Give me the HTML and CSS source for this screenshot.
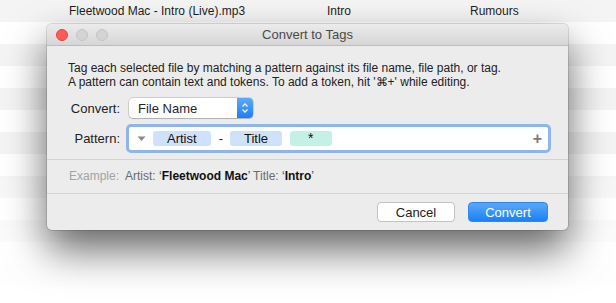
FILE: index.html
```html
<!DOCTYPE html>
<html>
<head>
  <title>Convert to Tags</title>
  <link rel="stylesheet" href="styles.css">
</head>
<body>
  <!-- 後ろのファイル一覧 -->
  <div class="file-list">
    <div class="row"><span class="c-file">Fleetwood Mac - Intro (Live).mp3</span><span class="c-title">Intro</span><span class="c-album">Rumours</span></div>
    <div class="row"></div>
    <div class="row"></div>
    <div class="row"></div>
    <div class="row"></div>
    <div class="row"></div>
    <div class="row"></div>
    <div class="row"></div>
    <div class="row"></div>
    <div class="row"></div>
    <div class="row"></div>
    <div class="row"></div>
    <div class="row"></div>
    <div class="row"></div>
  </div>
  <div class="fade"></div>

  <!-- シート -->
  <div class="sheet">
    <div class="titlebar">
      <div class="lights">
        <span class="light red"></span>
        <span class="light"></span>
        <span class="light"></span>
      </div>
      <div class="title">Convert to Tags</div>
    </div>

    <div class="body">
      <p class="intro">Tag each selected file by matching a pattern against its file name, file path, or tag.<br>A pattern can contain text and tokens. To add a token, hit '&#8984;+' while editing.</p>

      <div class="field">
        <label class="label">Convert:</label>
        <div class="popup">
          <span class="popup-text">File Name</span>
          <span class="stepper">
            <svg width="8" height="12" viewBox="0 0 8 12"><path d="M1.5 4.5 L4 2 L6.5 4.5 M1.5 7.5 L4 10 L6.5 7.5" fill="none" stroke="#fff" stroke-width="1.3"/></svg>
          </span>
        </div>
      </div>

      <div class="field pattern-field">
        <label class="label">Pattern:</label>
        <div class="token-field">
          <svg class="menu-arrow" width="9" height="6" viewBox="0 0 9 6"><path d="M0.5 0.5 L8.5 0.5 L4.5 5 Z" fill="#8a8a8a"/></svg>
          <span class="token">Artist</span>
          <span class="sep">-</span>
          <span class="token">Title</span>
          <span class="token any">*</span>
          <span class="plus">+</span>
        </div>
      </div>
    </div>

    <div class="example">
      <span class="ex-label">Example:</span>&nbsp; Artist: <span class="q">&lsquo;<b>Fleetwood Mac</b>&rsquo;</span> Title: <span class="q">&lsquo;<b>Intro</b>&rsquo;</span>
    </div>

    <div class="buttons">
      <button class="btn">Cancel</button>
      <button class="btn primary">Convert</button>
    </div>
  </div>
</body>
</html>
```

FILE: styles.css
```css
/* 全体 */
body {
  margin: 0;
  width: 616px;
  height: 303px;
  overflow: hidden;
  position: relative;
  background: #fff;
  font-family: "Liberation Sans", Arial, sans-serif;
  color: #262626;
}

/* 後ろの一覧 */
.file-list {
  display: flex;
  flex-direction: column;
}

.row {
  display: flex;
  align-items: center;
  height: 22px;
  font-size: 12px;
  color: #1e1e1e;
}

.row:nth-child(odd) {
  background: #f4f4f4;
}

.c-file {
  width: 258px;
  padding-left: 69px;
}

.c-title {
  width: 143px;
}

/* 下のほうを白く */
.fade {
  position: absolute;
  left: 0;
  right: 0;
  top: 150px;
  bottom: 0;
  background: linear-gradient(rgba(255,255,255,0), rgba(255,255,255,0.95) 80%);
}

/* シート */
.sheet {
  position: absolute;
  left: 47px;
  top: 24px;
  width: 521px;
  height: 206px;
  background: #ececec;
  border-radius: 5px;
  box-shadow: 0 0 0 1px rgba(0,0,0,0.12), 0 20px 40px rgba(0,0,0,0.6);
  display: flex;
  flex-direction: column;
  overflow: hidden;
}

/* タイトルバー */
.titlebar {
  height: 21px;
  display: flex;
  align-items: center;
  background: linear-gradient(#ebebeb, #d6d6d6);
  border-bottom: 1px solid #bcbcbc;
  position: relative;
}

.lights {
  display: flex;
  gap: 8px;
  padding-left: 9px;
}

.light {
  width: 12px;
  height: 12px;
  border-radius: 50%;
  box-sizing: border-box;
  background: #d4d4d4;
  border: 1px solid #c3c3c3;
}

.light.red {
  background: #fc5d57;
  border-color: #e2443f;
}

.title {
  position: absolute;
  left: 0;
  right: 0;
  text-align: center;
  font-size: 13px;
  color: #4a4a4a;
}

/* 本文 */
.body {
  padding: 15px 0 0 21px;
}

.intro {
  margin: 0;
  font-size: 12px;
  line-height: 14px;
  color: #222;
}

.field {
  display: flex;
  align-items: center;
  margin-top: 9px;
  gap: 9px;
}

.label {
  width: 52px;
  text-align: right;
  font-size: 13px;
  color: #222;
}

/* ポップアップ */
.popup {
  width: 124px;
  height: 20px;
  box-sizing: border-box;
  display: flex;
  align-items: center;
  background: #fff;
  border-radius: 4px;
  box-shadow: 0 0 0 0.5px rgba(0,0,0,0.25), 0 1px 1px rgba(0,0,0,0.15);
  overflow: hidden;
}

.popup-text {
  flex: 1;
  padding-left: 9px;
  font-size: 13px;
}

.stepper {
  width: 16px;
  height: 20px;
  display: flex;
  align-items: center;
  justify-content: center;
  background: linear-gradient(#5fa9fb, #1b7ff7);
}

/* パターン欄 */
.pattern-field {
  margin-top: 6px;
  gap: 6px;
}

.token-field {
  width: 425px;
  height: 29px;
  box-sizing: border-box;
  border: 3px solid #8fb6ec;
  border-radius: 5px;
  background: #fff;
  display: flex;
  align-items: center;
  padding: 0 6px 0 7px;
  font-size: 13px;
}

.menu-arrow {
  margin: 0 7px 0 1px;
}

.token {
  height: 15px;
  line-height: 15px;
  padding: 0 14px;
  background: #cfe2fb;
  border-radius: 3px;
  color: #111;
}

.token.any {
  background: #c4f1e5;
  padding: 0 18px;
  margin-left: 8px;
  font-size: 14px;
}

.sep {
  padding: 0 7px 0 8px;
}

.plus {
  margin-left: auto;
  color: #7a7a7a;
  font-size: 16px;
  font-weight: bold;
}

/* 例 */
.example {
  margin-top: 6px;
  border-top: 1px solid #d3d3d3;
  border-bottom: 1px solid #d3d3d3;
  height: 33px;
  line-height: 33px;
  padding-left: 22px;
  font-size: 12px;
  color: #6a6a6a;
  white-space: nowrap;
}

.ex-label {
  color: #a3a3a3;
}

.example b {
  color: #111;
}

.q {
  color: #444;
}

/* ボタン */
.buttons {
  display: flex;
  justify-content: flex-end;
  gap: 13px;
  padding: 8px 20px 0 0;
}

.btn {
  height: 20px;
  width: 78px;
  padding: 0;
  font-family: inherit;
  font-size: 13px;
  color: #222;
  background: #fff;
  border: 1px solid #c3c3c3;
  border-radius: 4px;
}

.btn.primary {
  width: 80px;
  color: #fff;
  border-color: #2f86f4;
  background: linear-gradient(#5ba8fb, #1a80f7);
}
```
